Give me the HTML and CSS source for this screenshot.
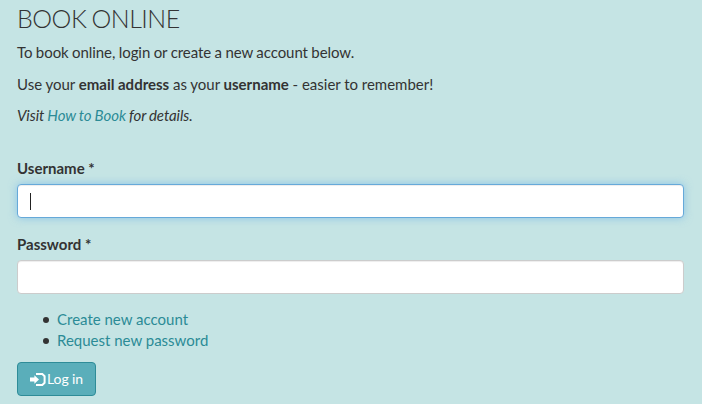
FILE: index.html
```html
<!DOCTYPE html>
<html lang="en">
<head>
<meta charset="utf-8">
<title>Book Online</title>
<link rel="stylesheet" href="styles.css">
</head>
<body>
<main class="page">
  <h2 class="title">BOOK ONLINE</h2>
  <p class="intro">To book online, login or create a new account below.</p>
  <p class="hint">Use your <strong>email address</strong> as your <strong>username</strong> - easier to remember!</p>
  <p class="visit"><em>Visit <a href="#">How to Book</a> for details.</em></p>
  <form class="login">
    <div class="field">
      <label for="user">Username *</label>
      <div class="control focused" id="user"><span class="caret"></span></div>
    </div>
    <div class="field">
      <label for="pass">Password *</label>
      <div class="control" id="pass"></div>
    </div>
    <ul class="links">
      <li><a href="#">Create new account</a></li>
      <li><a href="#">Request new password</a></li>
    </ul>
    <button type="button" class="submit">
      <svg class="icon" viewBox="0 0 16 13" width="16" height="13"><path d="M6 1.1H12.3L14.6 3.2V9.8L12.3 11.9H6" fill="none" stroke="#fff" stroke-width="2"/><path d="M4.4 2.3L9 6.5L4.4 10.7V8.5H0V4.5H4.4Z" fill="#fff"/></svg>
      <span>Log in</span>
    </button>
  </form>
</main>
</body>
</html>
```
FILE: styles.css
```css
* { box-sizing: border-box; }
body {
  margin: 0;
  background: #c5e4e4;
  color: #333;
  font: 15px/21px Lato, sans-serif;
}
.page { padding: 2px 18px 0 17px; height: 404px; overflow: hidden; }
.title {
  margin: 0 0 7px;
  font-size: 25px;
  line-height: 33px;
  font-weight: 300;
  letter-spacing: -0.5px;
  word-spacing: -1px;
}
p { margin: 0 0 10.5px; }
.intro { letter-spacing: -0.07px; word-spacing: -0.3px; }
.hint { word-spacing: -0.1px; }
.visit { letter-spacing: -0.07px; word-spacing: -0.4px; }
a { color: #2b8b96; text-decoration: none; }
.login { margin-top: 32px; }
.field { margin-bottom: 16px; }
.field + .links { margin-top: -1px; }
label { display: block; font-weight: 700; margin-bottom: 5px; }
.control {
  height: 34px;
  border: 1px solid #ccc;
  border-radius: 4px;
  background: #fff;
  box-shadow: inset 0 1px 1px rgba(0, 0, 0, .075);
  padding: 8px 12px;
}
.focused {
  border-color: #66a9d9;
  box-shadow: inset 0 1px 1px rgba(0, 0, 0, .075), 0 0 8px rgba(102, 175, 233, .6);
}
.caret { display: block; width: 1px; height: 17px; background: #222; }
.links { margin: 0 0 11px; padding: 0 0 0 26px; list-style: none; }
.links li { display: flex; align-items: center; gap: 8px; }
.links li::before {
  content: "";
  width: 6px;
  height: 6px;
  border-radius: 50%;
  background: #333;
}
.submit {
  display: flex;
  align-items: center;
  gap: 1px;
  width: 79px;
  height: 34px;
  padding: 0 12px;
  border: 1px solid #2e8c98;
  border-radius: 4px;
  background: #5aaeba;
  color: #fff;
  font: 14px/20px Lato, sans-serif;
  letter-spacing: -0.1px;
  white-space: nowrap;
}
.icon { flex: none; }
```
